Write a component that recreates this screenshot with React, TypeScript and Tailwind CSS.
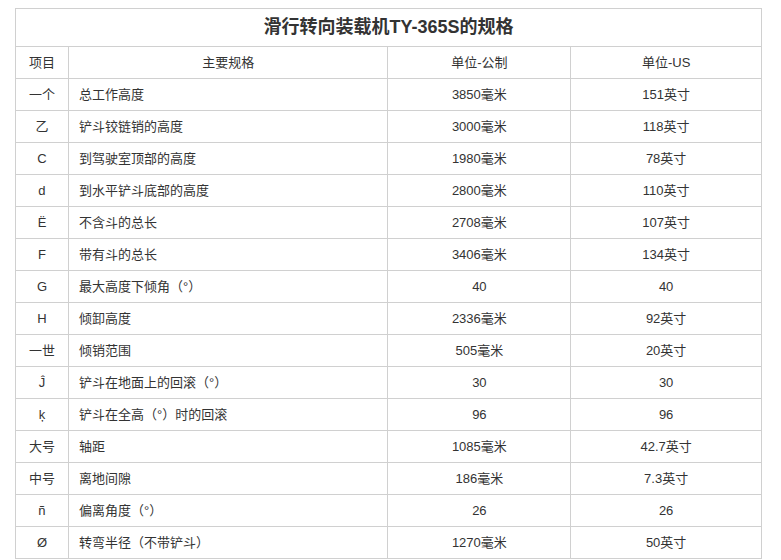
const rows: [string, string, string, string][] = [
  ["一个", "总工作高度", "3850毫米", "151英寸"],
  ["乙", "铲斗铰链销的高度", "3000毫米", "118英寸"],
  ["C", "到驾驶室顶部的高度", "1980毫米", "78英寸"],
  ["d", "到水平铲斗底部的高度", "2800毫米", "110英寸"],
  ["Ë", "不含斗的总长", "2708毫米", "107英寸"],
  ["F", "带有斗的总长", "3406毫米", "134英寸"],
  ["G", "最大高度下倾角（°）", "40", "40"],
  ["H", "倾卸高度", "2336毫米", "92英寸"],
  ["一世", "倾销范围", "505毫米", "20英寸"],
  ["Ĵ", "铲斗在地面上的回滚（°）", "30", "30"],
  ["ķ", "铲斗在全高（°）时的回滚", "96", "96"],
  ["大号", "轴距", "1085毫米", "42.7英寸"],
  ["中号", "离地间隙", "186毫米", "7.3英寸"],
  ["ñ", "偏离角度（°）", "26", "26"],
  ["Ø", "转弯半径（不带铲斗）", "1270毫米", "50英寸"],
];

export default function App() {
  const cell = "border border-[#d0d0d0] h-[32px] text-[13px]";
  return (
    <div className="w-[781px] h-[560px] bg-white overflow-hidden pt-[8px] pl-[15px]" style={{ fontFamily: '"Liberation Sans", "Noto Sans CJK SC", sans-serif' }}>
      <table className="border-collapse w-[747px] text-[#333]">
        <colgroup>
          <col className="w-[53px]" />
          <col className="w-[320px]" />
          <col className="w-[183px]" />
          <col className="w-[191px]" />
        </colgroup>
        <tbody>
          <tr>
            <td colSpan={4} className="border border-[#d0d0d0] h-[38px] text-center text-[18px] font-bold text-[#333]">滑行转向装载机TY-365S的规格</td>
          </tr>
          <tr>
            <td className={`${cell} text-center`}>项目</td>
            <td className={`${cell} text-center`}>主要规格</td>
            <td className={`${cell} text-center`}>单位-公制</td>
            <td className={`${cell} text-center`}>单位-US</td>
          </tr>
          {rows.map((r, i) => (
            <tr key={i}>
              <td className={`${cell} text-center`}>{r[0]}</td>
              <td className={`${cell} pl-[10px]`}>{r[1]}</td>
              <td className={`${cell} text-center`}>{r[2]}</td>
              <td className={`${cell} text-center`}>{r[3]}</td>
            </tr>
          ))}
        </tbody>
      </table>
    </div>
  );
}
